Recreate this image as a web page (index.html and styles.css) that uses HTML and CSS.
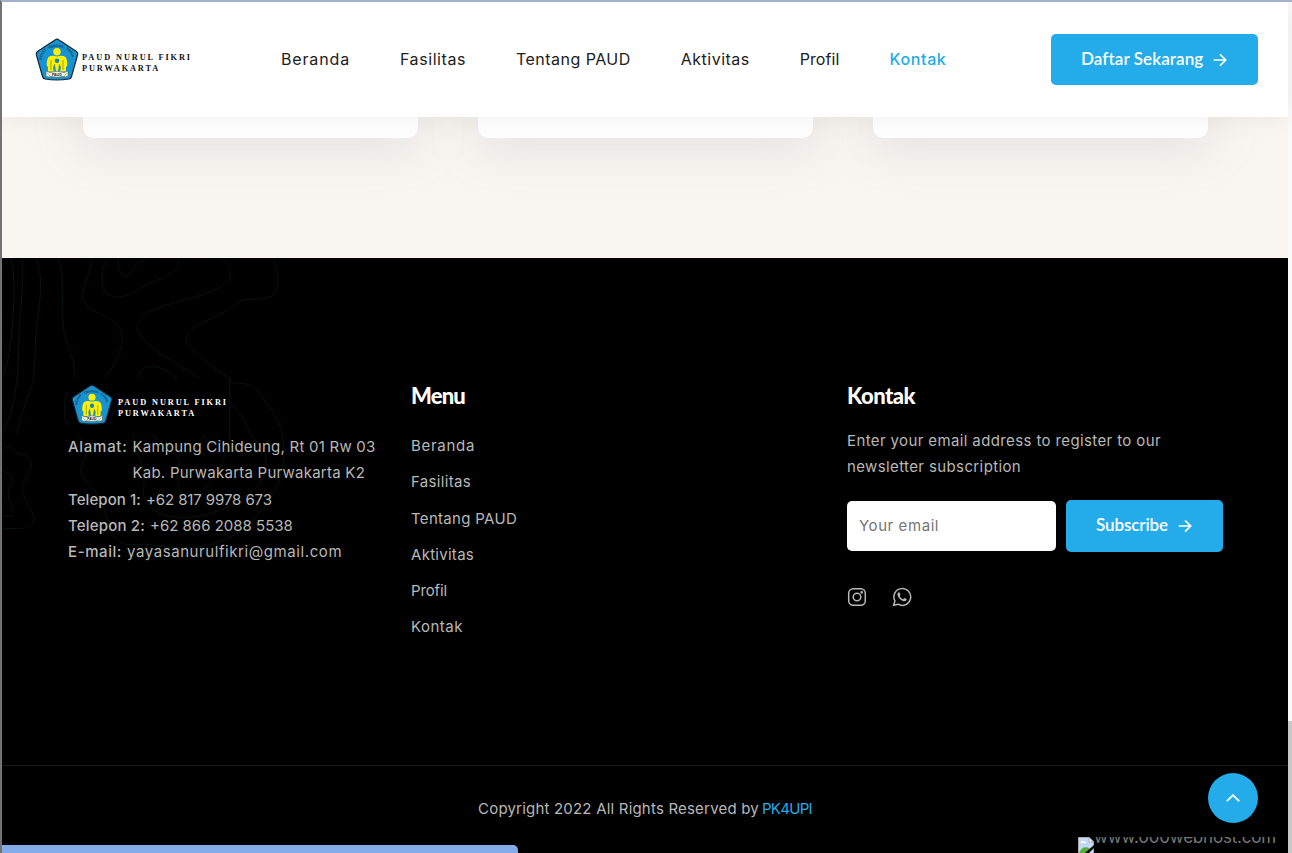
FILE: index.html
```html
<!DOCTYPE html>
<html lang="id">
<head>
<meta charset="utf-8">
<title>PAUD Nurul Fikri Purwakarta</title>
<link rel="stylesheet" href="styles.css">
</head>
<body>
<svg width="0" height="0" class="defs">
  <symbol id="emblem" viewBox="0 0 44 44">
    <path d="M22 1.2 Q23 1.2 24 2L41.5 13.5Q43 14.5 42.7 16.500L36.500 38.500Q36 40.500 34 41Q22 43 10 41Q8 40.500 7.500 38.500L1.300 16.500Q1 14.500 2.500 13.500L20 2Q21 1.200 22 1.200Z" class="emblem-shield"/>
    <path id="arc" d="M6.500 22Q8 9.500 22 8.800Q36 9.500 37.500 22" fill="none"/>
    <text class="emblem-text"><textPath href="#arc">SEHAT · CERDAS · CERIA</textPath></text>
    <circle cx="22" cy="13.800" r="3.700" fill="#fff200"/>
    <path d="M13.500 19Q17 17 22 18.500Q27 17 30.500 19Q33 23 32 28.500H31V33.500H25.500V28.500L24 26.500L23 33.500H21L20 26.500L18.500 28.500V33.500H13V28.500H12Q11 23 13.500 19Z" fill="#fff200"/>
    <circle cx="22" cy="22.800" r="2.300" fill="#1d82b8"/>
    <path d="M16 22V32M28 22V32M19.500 26L18.500 31M24.500 26L25.500 31" stroke="#697b2d" stroke-width=".7"/>
    <path d="M11 33L15 34.500Q22 32 29 34.500L33 33L33 38Q31 39.500 28 38.500Q22 40 16 38.500Q13 39.500 11 38Z" fill="#f4f4e8" stroke="#50605f" stroke-width=".6"/>
    <path d="M12 35L15 38M32 35L29 38" stroke="#d0c83a"/>
    <text x="17" y="37.700" class="emblem-paud">PAUD</text>
  </symbol>
  <symbol id="arrow" viewBox="0 0 14 14"><path d="M.7 7H12.500M7 1.300L12.700 7L7 12.700" fill="none" stroke="currentColor" stroke-width="1.700"/></symbol>
</svg>
<div class="frame">
  <div class="page">
    <header class="header">
      <div class="brand"><svg class="emblem"><use href="#emblem"/></svg><div class="brand-name"><div>PAUD NURUL FIKRI</div><div>PURWAKARTA</div></div></div>
      <nav class="nav">
        <a class="beranda">Beranda</a><a class="fasilitas">Fasilitas</a><a class="tentang">Tentang PAUD</a><a class="aktivitas">Aktivitas</a><a class="profil">Profil</a><a class="active kontak">Kontak</a>
      </nav>
      <div class="btn register"><span>Daftar Sekarang</span><svg><use href="#arrow"/></svg></div>
    </header>
    <section class="cards"><div class="card"></div><div class="card"></div><div class="card"></div></section>
    <footer class="footer">
      <svg class="contours" viewBox="6 24 894 876">
        <path d="M31 24C48 80 42 150 38 210C34 280 24 340 7 383M67 24C70 80 67 130 61 190C53 250 59 320 52 380C45 440 35 500 7 548M108 24C125 65 125 120 115 190C103 270 108 330 98 400C75 460 58 520 50 550M174 24C198 80 180 190 193 250C205 310 225 315 223 383"/>
        <path d="M276 24C270 80 242 115 248 143C256 190 330 190 360 232C380 280 348 340 316 383M320 24C300 70 302 120 325 135C370 153 400 125 440 105C490 82 545 65 537 36L532 24M355 24C350 60 365 82 378 80C395 75 400 48 416 38C422 32 435 32 437 24"/>
        <path d="M668 24C690 50 697 75 687 90C660 125 570 145 500 165C430 185 397 220 418 252C440 290 540 350 598 383M820 24C835 65 845 120 810 142C780 152 750 142 722 153C680 188 630 205 590 228C550 250 552 280 580 302C620 340 665 365 700 400C735 400 760 400 780 430C800 465 850 510 850 580C860 680 820 760 720 845C620 910 510 895 435 882C390 885 350 890 340 850C315 820 320 770 290 730C265 695 240 680 242 655C245 635 260 620 260 600C258 580 240 565 226 552"/>
        <path d="M414 383C420 355 438 347 465 350C500 355 515 376 532 383M690 460C740 500 735 540 765 570C820 620 800 690 755 725C690 780 600 810 520 800C465 795 425 755 430 720C440 670 420 630 408 590C400 570 405 560 399 552M456 552C475 580 535 600 538 640C530 680 525 735 570 735C610 730 630 700 655 670C665 630 690 590 690 552M612 552C615 590 650 590 657 552M203 425C190 460 190 495 203 526"/>
        <path d="M6 600C18 595 24 588 30 589C40 595 45 608 60 612C78 614 96 630 94 648C92 675 65 690 68 720C70 750 98 780 101 805C98 840 75 835 6 836M6 661C20 668 36 675 38 690C36 705 24 715 25 738C28 755 42 770 39 788C32 806 18 795 6 800"/>
      </svg>
      <div class="columns">
        <div class="about">
          <div class="brand dark"><svg class="emblem"><use href="#emblem"/></svg><div class="brand-name"><div>PAUD NURUL FIKRI</div><div>PURWAKARTA</div></div></div>
          <div class="row address"><b>Alamat:</b><div><div>Kampung Cihideung, Rt 01 Rw 03</div><div>Kab. Purwakarta Purwakarta K2</div></div></div>
          <div class="row phone1"><b>Telepon 1:</b><span>+62 817 9978 673</span></div>
          <div class="row phone2"><b>Telepon 2:</b><span>+62 866 2088 5538</span></div>
          <div class="row email"><b>E-mail:</b><span>yayasanurulfikri@gmail.com</span></div>
        </div>
        <div class="menu">
          <h3 class="menu-title">Menu</h3>
          <ul><li class="beranda">Beranda</li><li class="fasilitas">Fasilitas</li><li class="tentang">Tentang PAUD</li><li class="aktivitas">Aktivitas</li><li class="profil">Profil</li><li class="kontak">Kontak</li></ul>
        </div>
        <div class="contact">
          <h3>Kontak</h3>
          <p>Enter your email address to register to our<br>newsletter subscription</p>
          <div class="form"><div class="input">Your email</div><div class="btn subscribe"><span>Subscribe</span><svg><use href="#arrow"/></svg></div></div>
          <div class="social">
            <svg viewBox="0 0 20 20"><rect x="1.700" y="1.700" width="16.600" height="16.600" rx="4.500"/><circle cx="10" cy="10" r="3.800"/><circle cx="14.700" cy="5.300" r=".6"/></svg>
            <svg viewBox="0 0 20 20"><path d="M1.700 18.300L2.900 13.900A8.400 8.400 0 1 1 6.100 17.200Z"/><path class="handset" d="M7 5.300C5.300 5.900 5.100 7.300 5.800 8.900C6.800 11.300 9.100 13.500 11.700 14.200C13.400 14.600 14.600 13.500 14.700 12.300C14.700 12 12.700 11 12.400 11.100C12 11.200 11.500 12.300 11.100 12.200C9.700 11.700 8.500 10.600 7.800 9.200C7.700 8.800 8.500 8.200 8.400 7.800L7.600 5.600Q7.500 5.200 7 5.300Z"/></svg>
          </div>
        </div>
      </div>
      <div class="copyright"><span>Copyright 2022 All Rights Reserved by</span><a>PK4UPI</a></div>
    </footer>
  </div>
  <div class="scrollbar"><div class="thumb"></div></div>
  <div class="to-top"><svg viewBox="0 0 14 8"><path d="M.8 7.200L7 1.200L13.200 7.200"/></svg></div>
  <div class="host"><svg viewBox="0 0 16 16"><path d="M.5 16V.5H11L15.500 5V16" fill="#c3d9f7" stroke="#aaa"/><path d="M11 .5V5H15.500Z" fill="#fff" stroke="#aaa"/><path d="M2.500 6C3 3.500 5 3 6 4.500C8 4 8.500 5.500 8 6Z" fill="#fff"/><path d="M1 16C3 10 9 8.500 12 12L8 16Z" fill="#55ad3b"/><path d="M7 16L16 8V11L11 16Z" fill="#000"/></svg><span>www.000webhost.com</span></div>
  <div class="status"></div>
</div>
</body>
</html>
```
FILE: styles.css
```css
* { box-sizing: border-box; }
body { margin: 0; font-family: Inter, "Noto Sans", sans-serif; }
.defs { position: absolute; }
.frame { position: relative; width: 1292px; height: 853px; overflow: hidden; display: grid; grid-template-columns: 1286px 4px; border-top: 2px solid #a3b0c9; border-left: 2px solid #737373; }
.page { height: 851px; display: grid; grid-template-rows: 115px 141px 595px; }
.header { position: relative; z-index: 2; background: #fff; display: flex; align-items: center; padding: 0 30px 0 33px; box-shadow: 0 0 25px rgba(0,0,0,.07); }
.brand { display: flex; align-items: center; }
.emblem { width: 44px; height: 44px; flex: none; }
.emblem-shield { fill: #1793d2; stroke: #182833; stroke-width: 1.200; }
.emblem-text { font: bold 3.400px "Liberation Sans", sans-serif; fill: #12384a; }
.emblem-paud { font: bold 3.500px "Liberation Sans", sans-serif; fill: #222; }
.brand-name { font: bold 8.300px/11px "Liberation Serif", serif; letter-spacing: 1.900px; margin-left: 3px; padding-top: 6px; white-space: nowrap; color: #111; }
.header .brand { width: 246px; }
.nav { display: flex; gap: 50px; font-size: 16px; color: #212121; white-space: nowrap; margin-top: -2px; }
.nav .active { color: #24abe9; font-weight: 500; }
.nav .beranda { letter-spacing: .85px; }
.nav .fasilitas { letter-spacing: .57px; }
.nav .tentang { letter-spacing: .47px; }
.nav .aktivitas { letter-spacing: .49px; }
.nav .profil { letter-spacing: .08px; }
.nav .kontak { letter-spacing: .63px; }
.btn { display: flex; align-items: center; background: #24abe9; color: #fff; border-radius: 5px; font: 600 17px Lato, sans-serif; white-space: nowrap; padding: 0 30px; gap: 10px; }
.btn span { margin-top: -2px; }
.btn svg { width: 14px; height: 14px; }
.register { width: 207px; height: 51px; margin-left: auto; letter-spacing: .1px; }
.cards { background: #f9f5f0; display: flex; gap: 60px; padding-left: 81px; overflow: hidden; }
.card { width: 335px; height: 21px; background: #fff; border-radius: 0 0 10px 10px; box-shadow: 0 0 50px 4px rgba(150,158,168,.32); }
.footer { position: relative; background: #000; color: #b8b8b8; font-size: 15px; display: grid; grid-template-rows: 507px 88px; }
.contours { position: absolute; left: 0; top: 0; width: 298px; height: 292px; fill: none; stroke: #04150f; stroke-width: 3; }
.columns { position: relative; display: grid; grid-template-columns: 343px 436px 377px; padding: 120px 0 0 66px; }
.dark { width: 162px; height: 56px; background: #000; border-right: 1px solid #111; padding: 0 0 2px 2px; }
.dark .emblem { margin-left: 1px; width: 42px; height: 42px; }
.dark .emblem-shield { fill: #2f8fdc; }
.dark .brand-name { color: #fff; margin-left: 5px; }
.row { display: flex; gap: 5px; line-height: 26.250px; white-space: nowrap; }
.row b { font-weight: 500; }
.address { letter-spacing: .24px; }
.address b { letter-spacing: .72px; }
.phone1 b { letter-spacing: .08px; }
.phone1 span { letter-spacing: -.1px; }
.phone2 b { letter-spacing: .18px; }
.email { letter-spacing: .58px; }
h3 { margin: 0; color: #fff; font: 900 22px/36px Lato, sans-serif; letter-spacing: -.5px; }
.menu-title { letter-spacing: -.83px; }
.menu ul { list-style: none; margin: 14px 0 0; padding: 0; }
.menu li { height: 36.250px; line-height: 36px; }
.menu .beranda { letter-spacing: .7px; }
.menu .fasilitas { letter-spacing: .33px; }
.menu .tentang { letter-spacing: .31px; }
.menu .aktivitas { letter-spacing: .28px; }
.menu .profil { letter-spacing: -.13px; }
.menu .kontak { letter-spacing: .5px; }
.contact p { margin: 14px 0 0; line-height: 26.250px; letter-spacing: .38px; white-space: nowrap; }
.form { display: flex; align-items: center; gap: 10px; margin-top: 19px; height: 52px; }
.input { width: 209px; height: 50px; border-radius: 5px; background: #fff; color: #757575; display: flex; align-items: center; padding-left: 12px; letter-spacing: .57px; }
.subscribe { width: 157px; height: 52px; letter-spacing: -.1px; }
.social { display: flex; gap: 25px; margin-top: 35px; }
.social svg { width: 20px; height: 20px; fill: none; stroke: #b8b8b8; stroke-width: 1.500; }
.social .handset { fill: #b8b8b8; stroke: none; }
.copyright { border-top: 1px solid #181818; display: flex; justify-content: center; gap: 3px; line-height: 86px; letter-spacing: .2px; white-space: nowrap; }
.copyright a { color: #24abe9; letter-spacing: -.69px; }
.scrollbar { background: #fafafa; padding-top: 719px; height: 851px; }
.thumb { height: 132px; background: #c9c7c7; }
.to-top { position: absolute; left: 1206px; top: 771px; width: 50px; height: 50px; border-radius: 50%; background: #24abe9; display: grid; place-items: center; }
.to-top svg { width: 14px; height: 8px; fill: none; stroke: #fff; stroke-width: 1.800; }
.host { position: absolute; left: 1076px; top: 835px; height: 16px; overflow: hidden; display: flex; color: #777; font-size: 17px; letter-spacing: -.2px; white-space: nowrap; }
.host svg { width: 16px; height: 16px; flex: none; }
.host span { line-height: 20px; margin-top: -10.500px; }
.status { position: absolute; left: -1px; top: 843px; width: 517px; height: 8px; background: #84abe9; border-top-right-radius: 5px; }
```
